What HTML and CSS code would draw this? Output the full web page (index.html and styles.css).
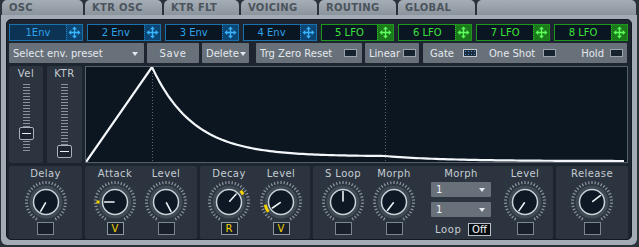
FILE: index.html
```html
<!DOCTYPE html>
<html>
<head>
    <title>Envelope</title>
    <link rel="stylesheet" href="styles.css">
</head>
<body>
    <div class="tabs">
        <div class="tab tab-osc">OSC</div>
        <div class="tab tab-ktrosc">KTR OSC</div>
        <div class="tab tab-ktrflt">KTR FLT</div>
        <div class="tab tab-voicing">VOICING</div>
        <div class="tab tab-routing">ROUTING</div>
        <div class="tab tab-global">GLOBAL</div>
        <div class="tab tab-blank"></div>
    </div>

    <div class="frame">
        <div class="panel">
            <div class="env-row">
                <div class="env selected"><span class="env-name">1Env</span><span class="env-move"></span></div>
                <div class="env"><span class="env-name">2 Env</span><span class="env-move"></span></div>
                <div class="env"><span class="env-name">3 Env</span><span class="env-move"></span></div>
                <div class="env"><span class="env-name">4 Env</span><span class="env-move"></span></div>
                <div class="env lfo"><span class="env-name">5 LFO</span><span class="env-move"></span></div>
                <div class="env lfo"><span class="env-name">6 LFO</span><span class="env-move"></span></div>
                <div class="env lfo"><span class="env-name">7 LFO</span><span class="env-move"></span></div>
                <div class="env lfo"><span class="env-name">8 LFO</span><span class="env-move"></span></div>
            </div>

            <div class="ctl-row">
                <div class="ctl ctl-preset">Select env. preset<span class="spacer"></span><span class="arrow"></span></div>
                <div class="ctl ctl-save">Save</div>
                <div class="ctl ctl-delete">Delete<span class="spacer"></span><span class="arrow"></span></div>
                <div class="ctl ctl-trg">Trg Zero Reset<span class="spacer"></span><span class="tog"></span></div>
                <div class="ctl ctl-linear">Linear<span class="spacer"></span><span class="tog"></span></div>
                <div class="ctl ctl-gate">
                    <span class="gate-label">Gate</span><span class="tog tog-dots"></span>
                    <span class="shot-label">One Shot</span><span class="tog"></span>
                    <span class="spacer"></span>
                    <span class="hold-label">Hold</span><span class="tog"></span>
                </div>
            </div>

            <div class="mid-row">
                <div class="slider">
                    <div class="slider-label">Vel</div>
                    <div class="ticks"></div>
                    <div class="handle handle-vel"></div>
                </div>
                <div class="slider">
                    <div class="slider-label">KTR</div>
                    <div class="ticks ticks-long"></div>
                    <div class="handle handle-ktr"></div>
                </div>
                <div class="graph">
                    <svg id="curve" width="541" height="95" viewBox="0 0 541 95"></svg>
                </div>
            </div>

            <div class="knob-row">
                <div class="group group-delay">
                    <div class="col">
                        <div class="knob-label">Delay</div>
                        <div class="knob" data-angle="-150"></div>
                        <div class="box"></div>
                    </div>
                </div>
                <div class="group group-attack">
                    <div class="col">
                        <div class="knob-label">Attack</div>
                        <div class="knob" data-angle="-90" data-dot="-90"></div>
                        <div class="box box-on">V</div>
                    </div>
                    <div class="col">
                        <div class="knob-label">Level</div>
                        <div class="knob" data-angle="152"></div>
                        <div class="box"></div>
                    </div>
                </div>
                <div class="group group-decay">
                    <div class="col">
                        <div class="knob-label">Decay</div>
                        <div class="knob" data-angle="42" data-arc="46,62"></div>
                        <div class="box box-on">R</div>
                    </div>
                    <div class="col">
                        <div class="knob-label">Level</div>
                        <div class="knob" data-angle="-125" data-arc="-128,-100"></div>
                        <div class="box box-on">V</div>
                    </div>
                </div>
                <div class="group group-sustain">
                    <div class="col">
                        <div class="knob-label">S Loop</div>
                        <div class="knob" data-angle="0"></div>
                        <div class="box"></div>
                    </div>
                    <div class="col">
                        <div class="knob-label">Morph</div>
                        <div class="knob" data-angle="-142"></div>
                        <div class="box"></div>
                    </div>
                    <div class="morph">
                        <div class="knob-label">Morph</div>
                        <div class="drop">1<span class="spacer"></span><span class="arrow"></span></div>
                        <div class="drop">1<span class="spacer"></span><span class="arrow"></span></div>
                        <div class="loop"><span class="loop-label">Loop</span><span class="off">Off</span></div>
                    </div>
                    <div class="col col-level">
                        <div class="knob-label">Level</div>
                        <div class="knob" data-angle="-145"></div>
                        <div class="box"></div>
                    </div>
                </div>
                <div class="group group-release">
                    <div class="col">
                        <div class="knob-label">Release</div>
                        <div class="knob" data-angle="52"></div>
                        <div class="box"></div>
                    </div>
                </div>
            </div>
        </div>
    </div>

    <script>
        var NS = 'http://www.w3.org/2000/svg';

        function el(name, attrs, parent) {
            var node = document.createElementNS(NS, name);
            for (var k in attrs) node.setAttribute(k, attrs[k]);
            parent.appendChild(node);
            return node;
        }

        function polar(cx, cy, r, deg) {
            var a = (deg - 90) * Math.PI / 180;
            return [cx + r * Math.cos(a), cy + r * Math.sin(a)];
        }

        // four-way move arrows on every env / lfo button
        document.querySelectorAll('.env-move').forEach(function (box) {
            var svg = el('svg', { width: 13, height: 13, viewBox: '0 0 13 13' }, box);
            el('path', { d: 'M6.5 3v7M3 6.5h7', class: 'move-line' }, svg);
            el('path', { d: 'M6.5 0.5L9 3.3H4zM6.5 12.5L9 9.7H4zM0.5 6.5L3.3 4V9zM12.5 6.5L9.7 4V9z', class: 'move-head' }, svg);
        });

        // knobs
        document.querySelectorAll('.knob').forEach(function (knob) {
            var cx = 24, cy = 22;
            var svg = el('svg', { width: 48, height: 42, viewBox: '0 0 48 42' }, knob);
            el('circle', { cx: cx, cy: cy, r: 16.5, class: 'knob-halo' }, svg);
            for (var i = 0; i <= 32; i++) {
                var deg = -150 + i * 300 / 32;
                var p1 = polar(cx, cy, 18, deg), p2 = polar(cx, cy, 21, deg);
                el('line', { x1: p1[0], y1: p1[1], x2: p2[0], y2: p2[1], class: 'knob-tick' }, svg);
            }
            el('circle', { cx: cx, cy: cy, r: 12.5, class: 'knob-body' }, svg);

            var arc = knob.getAttribute('data-arc');
            if (arc) {
                var r = arc.split(',').map(Number);
                var a = polar(cx, cy, 16, r[0]), b = polar(cx, cy, 16, r[1]);
                el('path', { d: 'M' + a[0] + ' ' + a[1] + 'A16 16 0 0 1 ' + b[0] + ' ' + b[1], class: 'knob-arc' }, svg);
            }
            var dot = knob.getAttribute('data-dot');
            if (dot) {
                var d = polar(cx, cy, 17, Number(dot));
                el('rect', { x: d[0] - 1.5, y: d[1] - 1.5, width: 3, height: 3, class: 'knob-dot' }, svg);
            }

            var angle = Number(knob.getAttribute('data-angle'));
            var s = polar(cx, cy, 1, angle), e = polar(cx, cy, 10.5, angle);
            el('line', { x1: s[0], y1: s[1], x2: e[0], y2: e[1], class: 'knob-pointer' }, svg);
        });

        // envelope curve
        var curve = document.getElementById('curve');
        el('line', { x1: 66.5, y1: 0, x2: 66.5, y2: 95, class: 'marker' }, curve);
        el('line', { x1: 299.5, y1: 0, x2: 299.5, y2: 95, class: 'marker' }, curve);

        var pts = ['0,95', '66,0'];
        var k = 5.6;
        for (var x = 67; x <= 299; x += 3) {
            var t = (x - 66) / 233;
            var y = 89 * (1 - Math.exp(-k * t)) / (1 - Math.exp(-k));
            pts.push(x + ',' + y.toFixed(2));
        }
        for (var x2 = 302; x2 <= 541; x2 += 4) {
            var t2 = (x2 - 299) / 242;
            var y2 = 89 + 5 * (1 - Math.exp(-4 * t2)) / (1 - Math.exp(-4));
            pts.push(x2 + ',' + y2.toFixed(2));
        }
        el('polyline', { points: pts.join(' '), class: 'env-curve' }, curve);
    </script>
</body>
</html>
```

FILE: styles.css
```css
body {
    margin: 0;
    width: 639px;
    height: 247px;
    overflow: hidden;
    background: #2a323a;
    font-family: "DejaVu Sans", sans-serif;
    font-size: 10px;
}

/* Tabs */
.tabs {
    display: flex;
    gap: 2px;
    padding-left: 2px;
    height: 15px;
}

.tab {
    height: 15px;
    box-sizing: border-box;
    padding-left: 7px;
    border-radius: 5px 5px 0 0;
    background: linear-gradient(#a5aeb6, #8b949c);
    color: #4b545d;
    font-weight: bold;
    font-size: 10px;
    letter-spacing: 0.3px;
    line-height: 16px;
}

.tab-osc { width: 81px; }
.tab-ktrosc { width: 77px; }
.tab-ktrflt { width: 75px; }
.tab-voicing { width: 76px; }
.tab-routing { width: 77px; }
.tab-global { width: 77px; }
.tab-blank { width: 159px; }

/* Frame */
.frame {
    margin-left: 1px;
    width: 636px;
    height: 230px;
    box-sizing: border-box;
    padding: 4px 5px 5px 5px;
    background: #a3acb4;
    border-radius: 0 0 6px 6px;
}

.panel {
    height: 100%;
    box-sizing: border-box;
    padding: 4px 3px 0 2px;
    background: #1d2630;
    border: 1px solid #121920;
    border-radius: 5px;
}

/* Env / LFO selector */
.env-row {
    display: grid;
    grid-template-columns: repeat(8, 1fr);
    gap: 4px;
    height: 17px;
}

.env {
    display: flex;
    border: 1px solid #1a72ad;
    background: #0a1621;
}

.env-name {
    flex: 1;
    text-align: center;
    color: #2ea2ea;
    line-height: 15px;
}

.env-move {
    width: 15px;
    display: flex;
    align-items: center;
    justify-content: center;
    background: #0c4675;
    border-left: 1px dotted #1f80c0;
}

.env.selected .env-name {
    background: #0c3353;
}

.move-line {
    stroke: #3ab6ff;
    stroke-width: 1.4;
}

.move-head {
    fill: #3ab6ff;
}

.env.lfo {
    border-color: #1d981d;
}

.env.lfo .env-name {
    color: #3ee23e;
}

.env.lfo .env-move {
    background: #1b781b;
    border-left-color: #2cb82c;
}

.env.lfo .move-line {
    stroke: #5cff5c;
}

.env.lfo .move-head {
    fill: #5cff5c;
}

/* Control row */
.ctl-row {
    display: flex;
    gap: 3px;
    height: 20px;
    margin-top: 2px;
}

.ctl {
    display: flex;
    align-items: center;
    box-sizing: border-box;
    padding: 0 6px 0 4px;
    background: #68717a;
    color: #e4e8ec;
    border-radius: 1px;
}

.ctl-preset { width: 135px; }
.ctl-save { width: 52px; justify-content: center; padding: 0; letter-spacing: 0.6px; }
.ctl-delete { width: 47px; padding-right: 3px; }
.ctl-trg { width: 106px; margin-left: 4px; padding-right: 5px; }
.ctl-linear { width: 54px; padding-right: 3px; }
.ctl-gate { width: 204px; margin-left: 1px; padding: 0 4px 0 7px; }

.spacer {
    flex: 1;
}

.arrow {
    width: 0;
    height: 0;
    border-left: 3.5px solid transparent;
    border-right: 3.5px solid transparent;
    border-top: 4px solid #e4e8ec;
    margin-top: 1px;
}

.tog {
    width: 13px;
    height: 8px;
    box-sizing: border-box;
    background: #17222f;
    border: 1px solid #9ba4ad;
}

.tog-dots {
    width: 14px;
    background-color: #1d2c3c;
    background-image: radial-gradient(#4a8cc8 0.6px, transparent 0.8px);
    background-size: 3px 3px;
    border-color: #c3cbd3;
    margin-left: 9px;
}

.shot-label {
    margin-left: 12px;
    margin-right: 8px;
}

.hold-label {
    margin-right: 6px;
}

/* Sliders and graph */
.mid-row {
    display: flex;
    height: 97px;
    margin-top: 3px;
}

.slider {
    position: relative;
    width: 34px;
    background: #2b343f;
    border-radius: 2px;
    margin-right: 4px;
}

.slider + .slider {
    width: 35px;
    margin-right: 3px;
}

.slider-label {
    text-align: center;
    color: #c5ccd3;
    line-height: 13px;
    padding-top: 1px;
    letter-spacing: 0.5px;
}

.ticks {
    margin: 4px 0 0 13px;
    width: 9px;
    height: 69px;
    background: repeating-linear-gradient(#8a939c 0 1px, transparent 1px 3px);
    clip-path: inset(0 1px 0 1px);
}

.ticks-long {
    height: 72px;
}

.handle {
    position: absolute;
    left: 10px;
    width: 15px;
    height: 13px;
    box-sizing: border-box;
    background: #1d2630;
    border: 1px solid #a9b2bb;
    border-radius: 2px;
}

.handle::after {
    content: "";
    position: absolute;
    left: 2px;
    right: 2px;
    top: 5px;
    height: 1px;
    background: #eef2f5;
}

.handle-vel { top: 61px; }
.handle-ktr { top: 79px; }

.graph {
    flex: 1;
    background: #0b1621;
    border: 1px solid #56606a;
}

.graph svg {
    display: block;
}

.marker {
    stroke: #5a6571;
    stroke-width: 1;
    stroke-dasharray: 1 2;
}

.env-curve {
    fill: none;
    stroke: #f4f7fa;
    stroke-width: 2.2;
    stroke-linejoin: round;
}

/* Knob row */
.knob-row {
    display: flex;
    gap: 3px;
    height: 73px;
    margin-top: 3px;
}

.group {
    display: flex;
    background: #2b343f;
    border-radius: 2px;
}

.group-delay { width: 73px; justify-content: center; }
.group-attack { width: 112px; padding-left: 6px; gap: 3px; box-sizing: border-box; }
.group-decay { width: 110px; padding-left: 5px; gap: 4px; box-sizing: border-box; }
.group-sustain { width: 240px; padding-left: 6px; gap: 3px; box-sizing: border-box; }
.group-release { width: 72px; justify-content: center; }

.col {
    width: 48px;
    display: flex;
    flex-direction: column;
    align-items: center;
}

.col-level {
    margin-left: 7px;
}

.knob-label {
    color: #c5ccd3;
    line-height: 13px;
    padding-top: 1px;
    letter-spacing: 0.4px;
    white-space: nowrap;
}

.knob svg {
    display: block;
}

.knob-halo {
    fill: #404a54;
}

.knob-tick {
    stroke: #8e97a0;
    stroke-width: 1.2;
}

.knob-body {
    fill: #0e1824;
    stroke: #c9d1d9;
    stroke-width: 1.5;
}

.knob-pointer {
    stroke: #eef2f5;
    stroke-width: 1.6;
    stroke-linecap: round;
}

.knob-arc {
    fill: none;
    stroke: #f2d200;
    stroke-width: 3;
}

.knob-dot {
    fill: #f2d200;
}

.box {
    width: 17px;
    height: 13px;
    box-sizing: border-box;
    background: #17202b;
    border: 1px solid #7d8690;
    color: #f2d200;
    text-align: center;
    line-height: 11px;
    font-size: 10px;
}

.box-on {
    border-color: #8f98a1;
}

.morph {
    width: 60px;
    margin-left: 10px;
    display: flex;
    flex-direction: column;
    align-items: stretch;
}

.morph .knob-label {
    text-align: center;
}

.drop {
    display: flex;
    align-items: center;
    height: 15px;
    margin-top: 2px;
    padding: 0 6px 0 5px;
    background: #68717a;
    color: #eef2f5;
    border-radius: 1px;
}

.drop + .drop {
    margin-top: 5px;
}

.loop {
    display: flex;
    align-items: center;
    margin-top: 6px;
}

.loop-label {
    color: #c5ccd3;
    margin-left: 4px;
    letter-spacing: 0.6px;
}

.off {
    margin-left: auto;
    width: 23px;
    height: 13px;
    box-sizing: border-box;
    background: #090d12;
    border: 1px solid #b8c0c8;
    color: #f4f6f8;
    text-align: center;
    line-height: 11px;
}
```
